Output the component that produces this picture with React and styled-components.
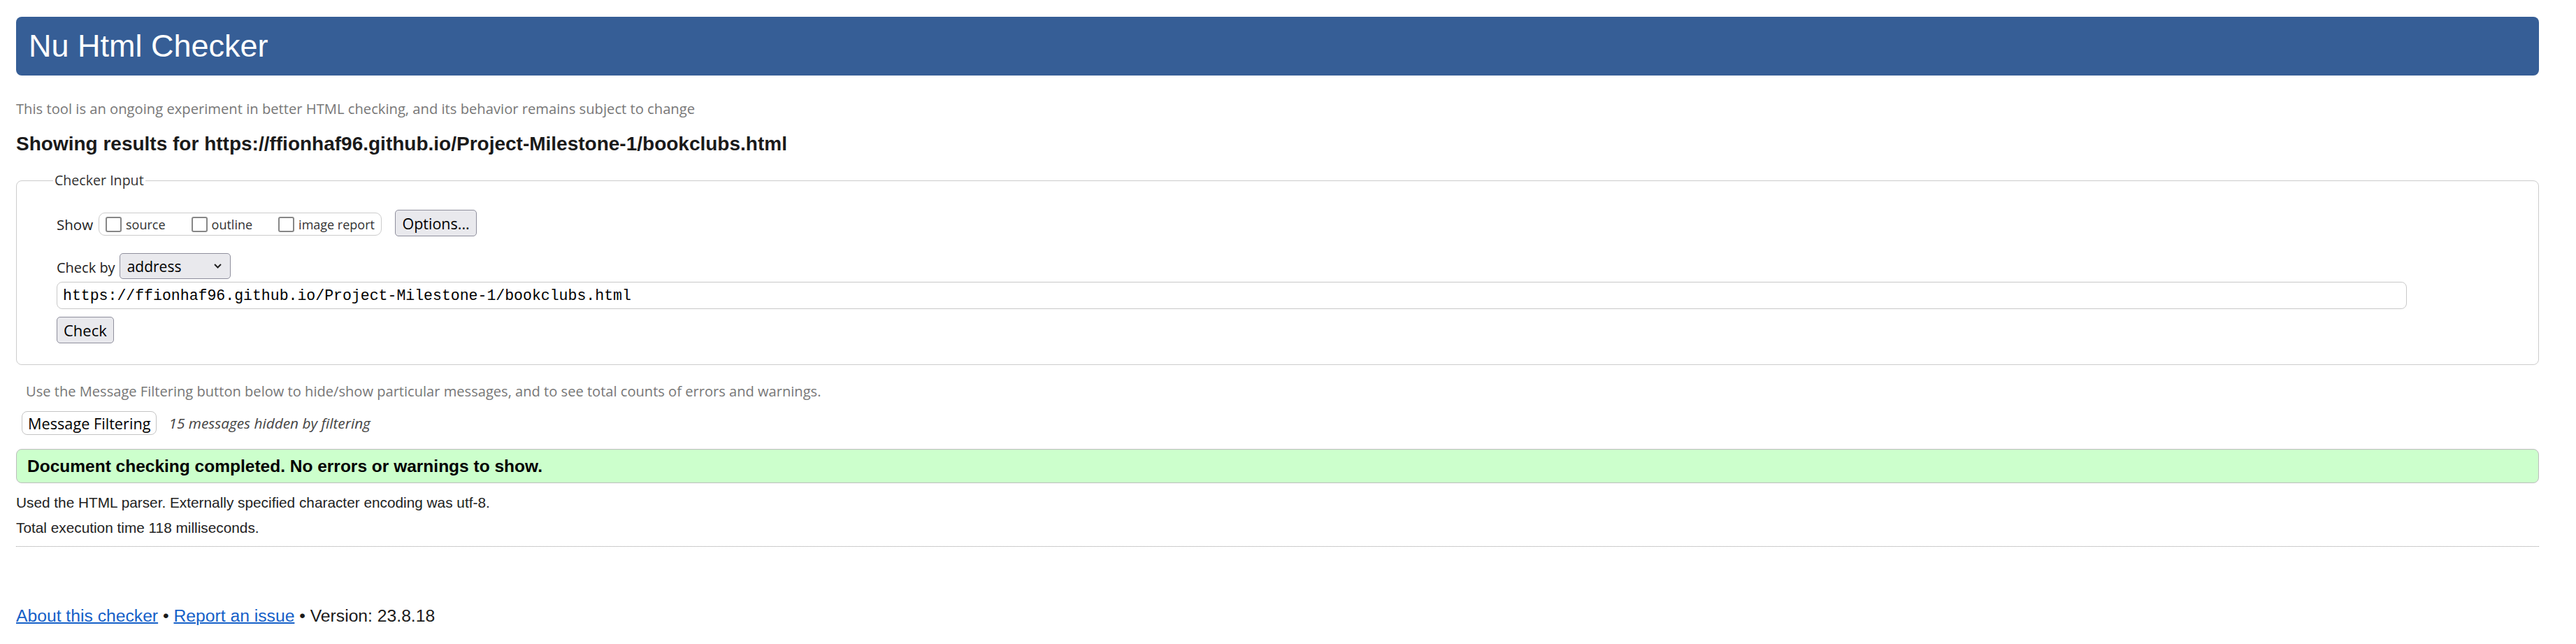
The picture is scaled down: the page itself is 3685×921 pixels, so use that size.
import React from "react";
import styled, { createGlobalStyle } from "styled-components";

const GlobalStyle = createGlobalStyle`
  html, body {
    margin: 0;
    padding: 0;
    background: #ffffff;
  }
  body {
    font-family: "Liberation Sans", Arial, sans-serif;
    color: #222;
  }
`;

const Page = styled.div`
  padding: 24px 53px 0 23px;
`;

const Header = styled.h1`
  margin: 0;
  height: 84px;
  display: flex;
  align-items: center;
  padding: 0 18px;
  background: #365e96;
  border-radius: 8px;
  color: #fff;
  font-family: "Liberation Sans", Arial, sans-serif;
  font-size: 45px;
  font-weight: 400;
  line-height: 84px;
`;

const Tagline = styled.p`
  margin: 32px 0 0;
  height: 30px;
  line-height: 30px;
  font-family: "Open Sans", sans-serif;
  font-size: 20.2px;
  color: #777;
`;

const ResultsTitle = styled.h2`
  margin: 19px 0 0;
  height: 34px;
  line-height: 34px;
  font-family: "Liberation Sans", Arial, sans-serif;
  font-size: 28px;
  font-weight: 700;
  color: #1a1a1a;
`;

const Fieldset = styled.fieldset`
  display: block;
  min-width: 0;
  margin: 22px 0 0;
  padding: 29px 188px 30px 57px;
  border: 1px solid #cccccc;
  border-radius: 8px;
`;

const Legend = styled.legend`
  margin-left: -5px;
  padding: 0 2px;
  line-height: 26px;
  font-family: "Open Sans", sans-serif;
  font-size: 19.6px;
  color: #333;
`;

const Row = styled.div`
  display: flex;
  align-items: center;
  height: ${(p) => p.$h}px;
  margin-top: ${(p) => p.$top || 0}px;
`;

const FieldLabel = styled.span`
  margin-right: ${(p) => p.$gap}px;
  margin-top: 4px;
  font-family: "Open Sans", sans-serif;
  font-size: ${(p) => p.$size}px;
  color: #222;
  white-space: nowrap;
`;

const CheckGroup = styled.div`
  display: flex;
  align-items: center;
  gap: 37px;
  box-sizing: border-box;
  height: 33px;
  margin: 3px 19px 0 0;
  padding: 0 9px;
  border: 1px solid #cccccc;
  border-radius: 9px;
`;

const Option = styled.label`
  display: flex;
  align-items: center;
  gap: 6px;
  font-family: "Open Sans", sans-serif;
  font-size: 18px;
  color: #333;
  white-space: nowrap;
`;

const Checkbox = styled.input.attrs({ type: "checkbox" })`
  appearance: none;
  box-sizing: border-box;
  width: 23px;
  height: 22px;
  margin: 0;
  border: 2.5px solid #878787;
  border-radius: 3px;
  background: #fff;
`;

const Button = styled.button`
  box-sizing: border-box;
  height: ${(p) => p.$h || 38}px;
  padding: 0 ${(p) => p.$pad || 9}px;
  background: ${(p) => (p.$plain ? "#ffffff" : "#e9e9ed")};
  border: 1px solid ${(p) => (p.$plain ? "#c4c4c4" : "#8f8f9d")};
  border-radius: ${(p) => (p.$plain ? 8 : 5)}px;
  font-family: "Open Sans", sans-serif;
  font-size: ${(p) => p.$size}px;
  color: #000;
  white-space: nowrap;
`;

const SelectBox = styled.div`
  display: flex;
  align-items: center;
  justify-content: space-between;
  box-sizing: border-box;
  width: 159px;
  height: 37px;
  padding: 0 12px 0 10px;
  background: #e9e9ed;
  border: 1px solid #8f8f9d;
  border-radius: 5px;
  font-family: "Open Sans", sans-serif;
  font-size: 21px;
  color: #000;
`;

const UrlInput = styled.input`
  display: block;
  box-sizing: border-box;
  width: 100%;
  height: 39px;
  margin-top: 4px;
  padding: 0 8px;
  border: 1px solid #c9c9c9;
  border-radius: 8px;
  font-family: "Liberation Mono", "DejaVu Sans Mono", monospace;
  font-size: 21.5px;
  color: #000;
  background: #fff;
`;

const FilterHint = styled.p`
  margin: 24px 0 0;
  padding-left: 14px;
  height: 28px;
  line-height: 28px;
  font-family: "Open Sans", sans-serif;
  font-size: 20.1px;
  color: #777;
`;

const FilterRow = styled.div`
  display: flex;
  align-items: center;
  height: 34px;
  margin-top: 14px;
  padding-left: 8px;
`;

const HiddenNote = styled.span`
  margin-left: 17px;
  font-family: "Open Sans", sans-serif;
  font-style: italic;
  font-size: 20.8px;
  color: #444;
`;

const SuccessBox = styled.div`
  box-sizing: border-box;
  height: 49px;
  margin-top: 20px;
  padding: 0 15px;
  background: #ccffcc;
  border: 1px solid #bdbdbd;
  border-radius: 8px;
  line-height: 47px;
  font-family: "Liberation Sans", Arial, sans-serif;
  font-size: 24.5px;
  font-weight: 700;
  color: #000;
`;

const Detail = styled.p`
  margin: ${(p) => p.$top}px 0 0;
  height: 26px;
  line-height: 26px;
  font-size: 20.8px;
  color: #222;
`;

const Rule = styled.hr`
  height: 0;
  margin: 13px 0 0;
  border: 0;
  border-top: 1px dotted #9a9a9a;
`;

const Footer = styled.p`
  margin: 83px 0 0;
  height: 32px;
  line-height: 32px;
  font-size: 24.7px;
  color: #1a1a1a;
`;

const Link = styled.a`
  color: #1560c8;
  text-decoration: underline;
  text-decoration-thickness: 2px;
`;

const Chevron = () => (
  <svg width="11" height="7" viewBox="0 0 11 7" fill="none">
    <polyline points="1,1 5.5,5.5 10,1" stroke="#222" strokeWidth="2" />
  </svg>
);

export default function App() {
  const url = "https://ffionhaf96.github.io/Project-Milestone-1/bookclubs.html";
  return (
    <Page>
      <GlobalStyle />
      <Header>Nu Html Checker</Header>
      <Tagline>
        This tool is an ongoing experiment in better HTML checking, and its
        behavior remains subject to change
      </Tagline>
      <ResultsTitle>Showing results for {url}</ResultsTitle>

      <Fieldset>
        <Legend>Checker Input</Legend>
        <Row $h={38}>
          <FieldLabel $size={20.5} $gap={8}>
            Show
          </FieldLabel>
          <CheckGroup>
            <Option>
              <Checkbox />
              source
            </Option>
            <Option>
              <Checkbox />
              outline
            </Option>
            <Option>
              <Checkbox />
              image report
            </Option>
          </CheckGroup>
          <Button $size={21.5} $pad={9.5}>
            Options...
          </Button>
        </Row>
        <Row $h={37} $top={24}>
          <FieldLabel $size={20} $gap={6}>
            Check by
          </FieldLabel>
          <SelectBox>
            address
            <Chevron />
          </SelectBox>
        </Row>
        <UrlInput defaultValue={url} readOnly />
        <Row $h={38} $top={11}>
          <Button $size={22}>Check</Button>
        </Row>
      </Fieldset>

      <FilterHint>
        Use the Message Filtering button below to hide/show particular
        messages, and to see total counts of errors and warnings.
      </FilterHint>
      <FilterRow>
        <Button $plain $h={34} $pad={8} $size={21.7}>
          Message Filtering
        </Button>
        <HiddenNote>15 messages hidden by filtering</HiddenNote>
      </FilterRow>

      <SuccessBox>
        Document checking completed. No errors or warnings to show.
      </SuccessBox>
      <Detail $top={15}>
        Used the HTML parser. Externally specified character encoding was
        utf-8.
      </Detail>
      <Detail $top={10}>Total execution time 118 milliseconds.</Detail>
      <Rule />
      <Footer>
        <Link href="#about">About this checker</Link> •{" "}
        <Link href="#report">Report an issue</Link> • Version: 23.8.18
      </Footer>
    </Page>
  );
}
